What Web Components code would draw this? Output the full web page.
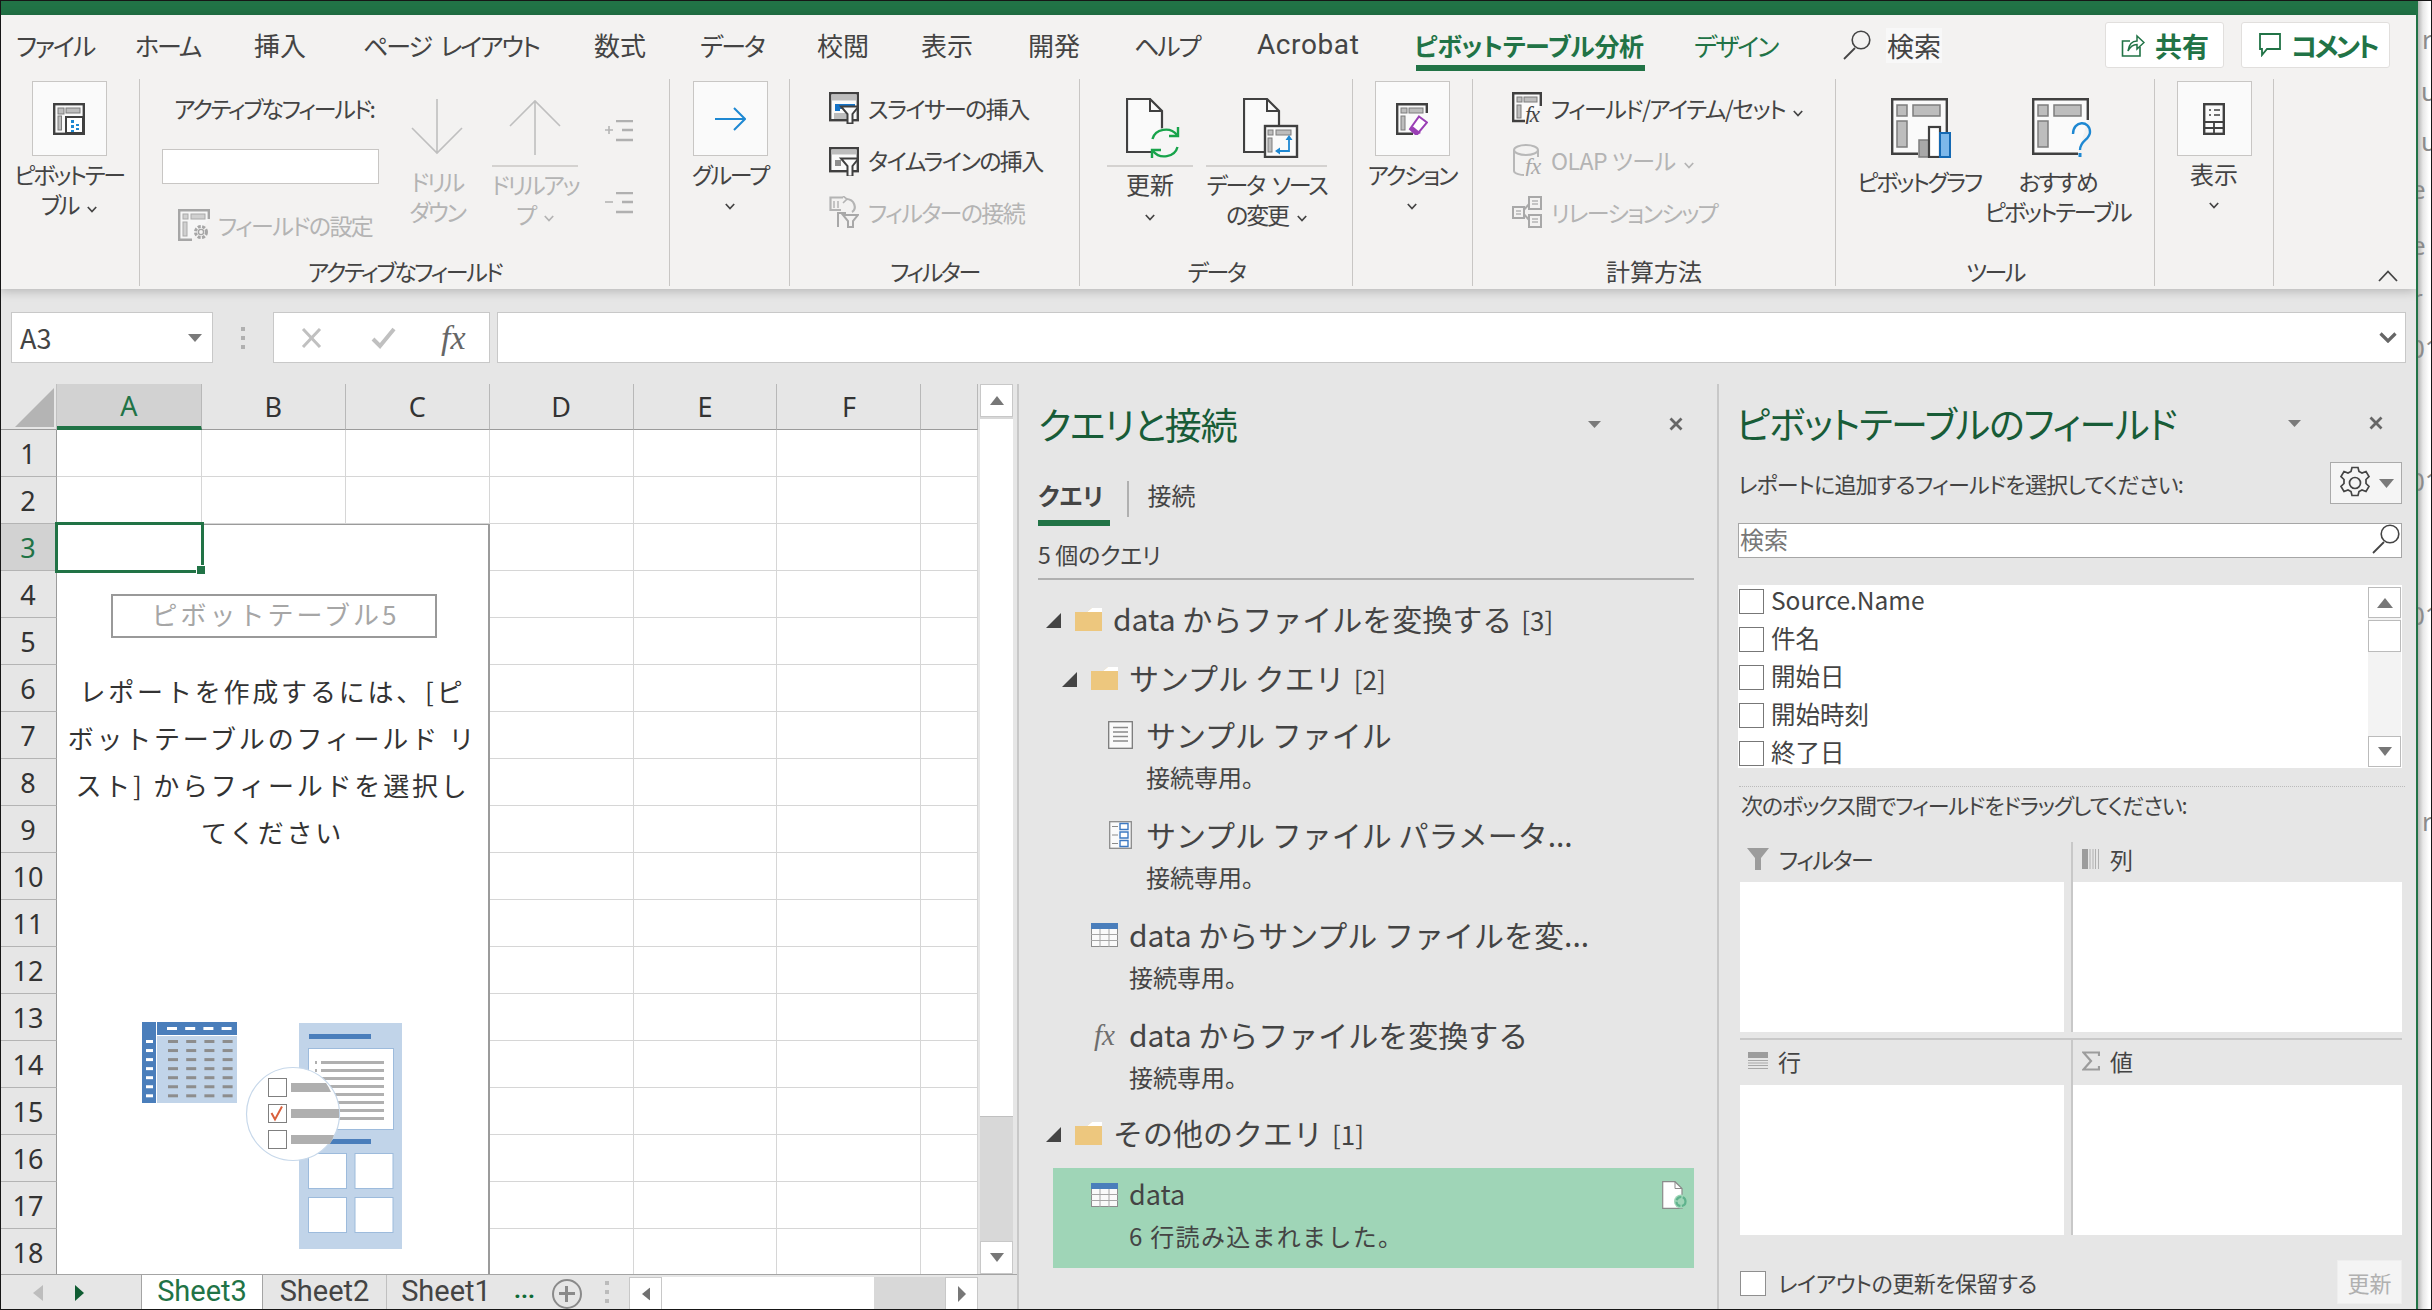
<!DOCTYPE html>
<html lang="ja">
<head>
<meta charset="utf-8">
<title>Excel</title>
<style>
  html, body { margin: 0; padding: 0; background: #e6e6e6; }
  body { font-family: "Noto Sans CJK JP", "Noto Sans", sans-serif; color: #444; font-feature-settings: "palt"; overflow: hidden; }
</style>
</head>
<body>
<xl-app>
  <xl-ribbon slot="ribbon">
    <xl-group w="140">
      <xl-big box icon="pivot" w="138" l1="ピボットテー" l2="ブル" chev></xl-big>
    </xl-group>
    <xl-group w="530" label="アクティブなフィールド">
      <xl-fieldbox></xl-fieldbox>
      <xl-big icon="down" w="60" l1="ドリル" l2="ダウン" off style="margin-left:28px"></xl-big>
      <xl-big rule icon="up" w="86" l1="ドリルアッ" l2="プ" chev off style="margin-left:25px"></xl-big>
      <xl-expand style="margin-left:27px"></xl-expand>
    </xl-group>
    <xl-group w="120">
      <xl-big box icon="arrow" w="120" l1="グループ" chev-line></xl-big>
    </xl-group>
    <xl-group w="290" label="フィルター" pad="39" column>
      <xl-row icon="slicer" label="スライサーの挿入"></xl-row>
      <xl-row icon="timeline" label="タイムラインの挿入"></xl-row>
      <xl-row icon="connect" label="フィルターの接続" off></xl-row>
    </xl-group>
    <xl-group w="273" label="データ" pad="27">
      <xl-big rule icon="refresh" w="86" l1="更新" ls="0" shift="8" chev-line></xl-big>
      <xl-big rule icon="source" w="121" l1="データ ソース" l2="の変更" shift="8" chev style="margin-left:13px"></xl-big>
    </xl-group>
    <xl-group w="120">
      <xl-big box icon="action" w="118" l1="アクション" chev-line></xl-big>
    </xl-group>
    <xl-group w="363" label="計算方法" ls="0" pad="39" column>
      <xl-row icon="fxitem" label="フィールド/アイテム/セット" chev></xl-row>
      <xl-row icon="olap" label="OLAP ツール" ls="-.5" chev off></xl-row>
      <xl-row icon="relation" label="リレーションシップ" off></xl-row>
    </xl-group>
    <xl-group w="319" label="ツール" pad="22">
      <xl-big icon="chart" w="122" shift="3" l1="ピボットグラフ"></xl-big>
      <xl-big icon="recommend" w="145" shift="8" l1="おすすめ" l2="ピボットテーブル" style="margin-left:5px"></xl-big>
    </xl-group>
    <xl-group w="119">
      <xl-big box icon="show" w="118" l1="表示" ls="0" chev-line></xl-big>
    </xl-group>
  </xl-ribbon>

  <xl-formula slot="formula"></xl-formula>

  <xl-sheet slot="sheet">
    <xl-placeholder></xl-placeholder>
  </xl-sheet>

  <xl-queries slot="queries">
    <xl-qitem pad="8" icon="folder" twisty label="data からファイルを変換する" count="[3]" gap="0"></xl-qitem>
    <xl-qitem pad="24" icon="folder" twisty label="サンプル クエリ" count="[2]" gap="17"></xl-qitem>
    <xl-qitem pad="70" icon="doc" label="サンプル ファイル" sub="接続専用。" gap="15"></xl-qitem>
    <xl-qitem pad="70" icon="param" label="サンプル ファイル パラメータ..." sub="接続専用。" gap="16"></xl-qitem>
    <xl-qitem pad="53" icon="table" label="data からサンプル ファイルを変..." sub="接続専用。" gap="16"></xl-qitem>
    <xl-qitem pad="53" icon="fx" label="data からファイルを変換する" sub="接続専用。" gap="16"></xl-qitem>
    <xl-qitem pad="8" icon="folder" twisty label="その他のクエリ" count="[1]" gap="14"></xl-qitem>
    <xl-qitem pad="38" icon="table" label="data" sub="6 行読み込まれました。" gap="14" selected></xl-qitem>
  </xl-queries>

  <xl-fields slot="fields">
    <xl-check label="Source.Name"></xl-check>
    <xl-check label="件名"></xl-check>
    <xl-check label="開始日"></xl-check>
    <xl-check label="開始時刻"></xl-check>
    <xl-check label="終了日"></xl-check>
  </xl-fields>
</xl-app>

<script>
const GR = '#404040', LG = '#bdbdbd', MG = '#7d7d7d', BL = '#1e88d2'

const svg = (w, h, body, vb) => `<svg xmlns="http://www.w3.org/2000/svg" width="${w}" height="${h}" viewBox="${vb || `0 0 ${w} ${h}`}" fill="none">${body}</svg>`

const docShape = (x, y, w, h, f) => `<path d="M${x+1} ${y+1}H${x+w-f}L${x+w-1} ${y+f}V${y+h-1}H${x+1}Z" fill="#fafafa" stroke="${GR}" stroke-width="2.2"/><path d="M${x+w-f} ${y+1}V${y+f}H${x+w-1}" stroke="${GR}" stroke-width="2"/>`

const ICONS = {
  pivot: svg(32, 32, `<rect x="1.2" y="1.2" width="29.6" height="29.6" fill="#fafafa" stroke="${GR}" stroke-width="2.4"/>
    <rect x="5" y="5" width="6" height="6" fill="${LG}" stroke="${MG}"/><rect x="13" y="5" width="14" height="5" fill="${LG}" stroke="${MG}"/>
    <rect x="5" y="13" width="3.5" height="14" fill="${LG}" stroke="${MG}"/>
    <rect x="13" y="14" width="17" height="16" fill="#fff" stroke="${GR}" stroke-width="2"/>
    <path d="M18 17h3v3h-3zM18 22h3v3h-3zM18 27h3v2h-3zM23 21h3v2h-3zM23 25h3v2h-3z" fill="${BL}"/>`),
  settings: svg(32, 32, `<path d="M14 30.8H1.2V1.2H30.8V10" stroke="#a6a6a6" stroke-width="2.4" fill="#f6f6f6"/>
    <rect x="5" y="5" width="5" height="5" fill="#d0d0d0" stroke="#aaa"/><rect x="13" y="5" width="14" height="5" fill="#d0d0d0" stroke="#aaa"/><rect x="5" y="13" width="4" height="14" fill="#d0d0d0" stroke="#aaa"/>
    <circle cx="23" cy="23" r="5.5" stroke="#a6a6a6" stroke-width="3" stroke-dasharray="3 1.4"/><circle cx="23" cy="23" r="2.6" stroke="#a6a6a6" stroke-width="1.4" fill="#f3f2f1"/>`),
  down: svg(52, 58, `<path d="M26 1V55M1 30L26 55L51 30" stroke="#bfbfbf" stroke-width="1.6"/>`),
  up: svg(52, 58, `<path d="M26 57V3M1 28L26 3L51 28" stroke="#bfbfbf" stroke-width="1.6"/>`),
  plus: svg(28, 22, `<path d="M0 10h8M4 6v8" stroke="#b5b5b5" stroke-width="1.6"/><path d="M11 1h17M17 10h11M11 20h17" stroke="#b0b0b0" stroke-width="2.6"/>`),
  minus: svg(28, 22, `<path d="M0 10h8" stroke="#b5b5b5" stroke-width="1.6"/><path d="M11 1h17M17 10h11M11 20h17" stroke="#b0b0b0" stroke-width="2.6"/>`),
  arrow: svg(32, 24, `<path d="M1 12H30M20 1L31 12L20 23" stroke="${BL}" stroke-width="2"/>`),
  slicer: svg(30, 32, `<rect x="1.2" y="1.2" width="27.6" height="27" fill="#fafafa" stroke="${GR}" stroke-width="2.4"/>
    <rect x="2.5" y="2.5" width="25" height="6" fill="${LG}"/>
    <path d="M6 19v-7h20v5h-15v2z" fill="#1573c7"/><rect x="5" y="21" width="13" height="6" fill="${LG}"/>
    <path d="M12 14.5H29.5L23.5 22V31.5H18.5V22Z" fill="#fafafa" stroke="${GR}" stroke-width="2"/>`),
  timeline: svg(30, 32, `<rect x="1.2" y="1.2" width="27.6" height="23" fill="#fafafa" stroke="${GR}" stroke-width="2.4"/>
    <rect x="2.5" y="2.5" width="25" height="5" fill="${LG}"/><rect x="6" y="13" width="6" height="6" fill="#8f8f8f"/>
    <path d="M12 11.5H29.5L23.5 19V29.5H18.5V19Z" fill="#fafafa" stroke="${GR}" stroke-width="2"/>`, '0 -3 30 32'),
  connect: svg(30, 32, `<path d="M12 14H1.5V1.5H14" stroke="#b4b4b4" stroke-width="2.2"/><path d="M5 5v7M9 5v7" stroke="#c4c4c4" stroke-width="2"/>
    <path d="M17 3C26 3 28 13 23 16" stroke="#b4b4b4" stroke-width="2.2"/><path d="M14 0L18 3L14 7" stroke="#b4b4b4" stroke-width="1.6"/>
    <path d="M9 31V17H17" stroke="#a8a8a8" stroke-width="2"/><path d="M14 19H29L24 25V31H19V25Z" fill="#f3f2f1" stroke="#a8a8a8" stroke-width="2"/>`),
  refresh: svg(56, 60, `${docShape(0, 0, 37, 55, 13)}
    <circle cx="39" cy="45" r="15" fill="#f6f6f6"/>
    <path d="M26.500 41C29 31 44 28 51 37M51.500 49C49 59 34 62 27 53" stroke="#17a34a" stroke-width="2.400"/>
    <path d="M52 29V38H43M26 61V52H35" stroke="#17a34a" stroke-width="2.400"/>`),
  source: svg(56, 60, `${docShape(0, 0, 37, 55, 13)}
    <rect x="22" y="28" width="32" height="31" fill="#fafafa" stroke="${GR}" stroke-width="2.4"/>
    <rect x="25" y="32" width="5" height="5" fill="${LG}" stroke="${MG}"/><rect x="33" y="32" width="15" height="5" fill="${LG}" stroke="${MG}"/><rect x="25" y="40" width="4" height="14" fill="${LG}" stroke="${MG}"/>
    <path d="M46 42V53H37" stroke="${BL}" stroke-width="1.8"/><path d="M46 37l-3.500 5h7zM32 53l5-3.500v7z" fill="${BL}"/>`),
  action: svg(32, 32, `<path d="M17 30.8H1.2V1.2H30.8V10" fill="#fafafa" stroke="${GR}" stroke-width="2.4"/>
    <rect x="5" y="5" width="6" height="5" fill="${LG}" stroke="${MG}"/><rect x="13" y="5" width="14" height="5" fill="${LG}" stroke="${MG}"/><rect x="5" y="13" width="4" height="14" fill="${LG}" stroke="${MG}"/>
    <path d="M23 13.5L31 19.5L20.5 32L14 26Z" fill="#fff" stroke="#9a3fb5" stroke-width="2"/><path d="M17 23.5L25 30L20.5 32L14 26Z" fill="#9a3fb5"/>`),
  fxitem: svg(30, 32, `<path d="M13 29H1.2V1.2H28.8V14" fill="#fafafa" stroke="${GR}" stroke-width="2.4"/>
    <rect x="5" y="5" width="5" height="5" fill="${LG}" stroke="${MG}"/><rect x="12" y="5" width="13" height="5" fill="${LG}" stroke="${MG}"/><rect x="5" y="13" width="4" height="13" fill="${LG}" stroke="${MG}"/>
    <text x="13" y="30" font-family="Liberation Serif" font-style="italic" font-size="23" fill="#444">fx</text>`),
  olap: svg(30, 32, `<path d="M2 6V27C2 30 10 31 12 31M26 6V13" stroke="#b8b8b8" stroke-width="2"/><ellipse cx="14" cy="6" rx="12" ry="5" fill="#f3f2f1" stroke="#b8b8b8" stroke-width="2"/>
    <text x="13" y="30" font-family="Liberation Serif" font-style="italic" font-size="23" fill="#a8a8a8">fx</text>`),
  relation: svg(30, 32, `<path d="M10 16L18 7M10 16L18 25" stroke="#aaa" stroke-width="2"/>
    <rect x="1" y="11" width="11" height="11" fill="#f3f2f1" stroke="#a8a8a8" stroke-width="2"/><rect x="17" y="1" width="12" height="12" fill="#f3f2f1" stroke="#a8a8a8" stroke-width="2"/><rect x="17" y="19" width="12" height="12" fill="#f3f2f1" stroke="#a8a8a8" stroke-width="2"/>
    <path d="M4 15h5M4 18h5M20 5h6M20 8h6M20 23h6M20 26h6" stroke="#b5b5b5" stroke-width="1.3"/>`),
  chart: svg(60, 60, `<path d="M27 55.8H1.2V1.2H55.8V50" fill="#fafafa" stroke="${GR}" stroke-width="2.4"/>
    <rect x="6" y="7" width="10" height="11" fill="${LG}" stroke="${MG}" stroke-width="1.5"/><rect x="22" y="7" width="27" height="11" fill="${LG}" stroke="${MG}" stroke-width="1.5"/><rect x="6" y="23" width="10" height="26" fill="${LG}" stroke="${MG}" stroke-width="1.5"/>
    <rect x="28" y="42" width="11" height="17" fill="#a8a8a8" stroke="${MG}" stroke-width="1.5"/><rect x="38" y="29" width="11" height="30" fill="#fff" stroke="${GR}" stroke-width="2.2"/><rect x="49" y="35" width="10" height="24" fill="#7db8ea" stroke="#1469b3" stroke-width="2"/>`),
  recommend: svg(60, 60, `<path d="M46 55.8H1.2V1.2H55.8V22" fill="#fafafa" stroke="${GR}" stroke-width="2.4"/>
    <rect x="6" y="7" width="10" height="11" fill="${LG}" stroke="${MG}" stroke-width="1.5"/><rect x="22" y="7" width="27" height="11" fill="${LG}" stroke="${MG}" stroke-width="1.5"/><rect x="6" y="23" width="10" height="26" fill="${LG}" stroke="${MG}" stroke-width="1.5"/>
    <path d="M41 36C41 22 58 22 58 34C58 42 48 42 48 52" stroke="${BL}" stroke-width="2.4"/><rect x="46.5" y="55" width="3" height="4" fill="${BL}"/>`),
  show: svg(22, 32, `<rect x="1.2" y="1.2" width="19.6" height="29.6" fill="#fafafa" stroke="${GR}" stroke-width="2.4"/>
    <path d="M6 7h2M11 7h6M6 12h2M11 12h6" stroke="${GR}" stroke-width="1.6"/><path d="M1 19h20M1 25h20M11 19v12" stroke="${GR}" stroke-width="1.8"/>`),
  magnifier: svg(28, 30, `<circle cx="18" cy="10" r="8.8" stroke="#444" stroke-width="1.6"/><path d="M12 18L1 29" stroke="#444" stroke-width="1.8"/>`),
  share: svg(24, 24, `<path d="M9 8H1.5V23H19V14" stroke="#217346" stroke-width="1.6"/><path d="M7 18C8 11 12 8 16 8V3L23 9.5L16 16V11.5C12 11.5 9 14 7 18Z" stroke="#217346" stroke-width="1.5" fill="#fff"/>`),
  comment: svg(22, 24, `<path d="M1 1H21V16H8L3 22V16H1Z" stroke="#217346" stroke-width="1.8" fill="#fff"/>`),
  folder: svg(27, 24, `<path d="M17 1H27V6H12Z" fill="#fff"/><path d="M0 5h12l5-4v4h10v19H0z" fill="#edc77e"/><path d="M17 1L12 5H27V1Z" fill="#fff"/>`),
  doc: svg(25, 28, `<rect x=".7" y=".7" width="23.6" height="26.6" fill="#fafafa" stroke="#7a7a7a" stroke-width="1.3"/><path d="M5 6.5h15M5 11h15M5 15.5h15M5 20h15" stroke="#8a8a8a" stroke-width="1.3"/>`),
  param: svg(23, 28, `<rect x=".7" y=".7" width="21.6" height="26.6" fill="#fafafa" stroke="#8a8a8a" stroke-width="1.3"/><path d="M3 5.5h6M3 14h6M3 22.5h6" stroke="#8a8a8a" stroke-width="1.2"/><path d="M11 2.5h8v6h-8zM11 11h8v6h-8zM11 19.500h8v6h-8z" stroke="#3d79c2" stroke-width="1.4" fill="#fff"/>`),
  table: svg(27, 24, `<rect x=".5" y=".5" width="26" height="23" fill="#fafafa" stroke="#8c8c8c"/><rect width="27" height="6" fill="#4a7ebb"/><path d="M0 11.500h27M0 17.500h27M9 6v18M18 6v18" stroke="#a6a6a6"/>`),
  fx: `<span class="fx">fx</span>`,
  docsync: svg(26, 28, `<path d="M.7.7H13L20 7.500V27.300H.7Z" fill="#fff" stroke="#8a8a8a" stroke-width="1.2"/><path d="M13 .7V7.500H20" stroke="#8a8a8a" stroke-width="1"/><circle cx="19" cy="20.500" r="7" fill="#9fd5b7"/><circle cx="19" cy="20.500" r="4.500" stroke="#5fb38d" stroke-width="2.2" stroke-dasharray="6 1.500"/>`),
  gear: svg(34, 34, `<path d="M14 1.500h6l1 4 3 1.500 4-1.500 3 5-3 3v4l3 3-3 5-4-1.500-3 1.500-1 4h-6l-1-4-3-1.500-4 1.500-3-5 3-3v-4l-3-3 3-5 4 1.500 3-1.500z" stroke="#444" stroke-width="1.700" fill="#f5f5f5"/><circle cx="17" cy="17" r="5.500" stroke="#444" stroke-width="1.700"/>`),
  filter: svg(22, 22, `<path d="M0 0H22L14 10V22H8V10Z" fill="#9c9c9c"/>`),
  cols: svg(18, 20, `<path d="M0 0h6v20H0z" fill="#9c9c9c"/><path d="M8 0v20M11 0v20M13.500 0v20M16.500 0v20" stroke="#b0b0b0" stroke-width="1"/>`),
  rows: svg(20, 18, `<path d="M0 0h20v6H0z" fill="#9c9c9c"/><path d="M0 8.500h20M0 11h20M0 13.500h20M0 16.500h20" stroke="#a8a8a8" stroke-width="1"/>`),
  sigma: svg(18, 20, `<path d="M17 5V1.500H1.500L9 10L1.500 18.500H17V15" stroke="#9c9c9c" stroke-width="2.200"/>`),
  illustration: svg(262, 228, `
    <rect x="0" y="0" width="14" height="81" fill="#4a7ebb"/><rect x="15" y="0" width="80" height="13" fill="#4a7ebb"/><rect x="15" y="14" width="80" height="67" fill="#c1d4e9"/>
    <g fill="#fff">${[0, 1, 2, 3].map(i => `<rect x="${25 + i * 18.200}" y="5" width="10" height="3"/>`).join('')}${[0,1,2,3,4,5,6].map(i => `<rect x="4" y="${18 + i * 9.050}" width="7" height="3"/>`).join('')}</g>
    <g fill="#8d8d8d">${[0,1,2,3,4,5,6].map(r => [0,1,2,3].map(c => `<rect x="${26 + c * 18.200}" y="${18 + r * 9.050}" width="10" height="3"/>`).join('')).join('')}</g>
    <rect x="157" y="1" width="103" height="226" fill="#c1d4e9"/>
    <rect x="167" y="12" width="62" height="5" fill="#4a7ebb"/><rect x="167" y="117" width="62" height="5" fill="#4a7ebb"/>
    <rect x="166.500" y="26.500" width="85" height="81" fill="#fff" stroke="#9dbbdc"/>
    ${[0,1,2,3,4,5,6,7].map(i => `<rect x="179" y="${39 + i * 8}" width="63" height="3" fill="#b0b0b0"/>`).join('')}
    <rect x="173" y="39" width="2" height="3" fill="#b0b0b0"/><rect x="173" y="47" width="2" height="3" fill="#b0b0b0"/>
    ${[0,1].map(r => [0,1].map(c => `<rect x="${166.500 + c * 46.500}" y="${131.500 + r * 44}" width="38" height="35" fill="#fff" stroke="#9dbbdc"/>`).join('')).join('')}
    <ellipse cx="151" cy="92" rx="46.500" ry="46.500" fill="#fff" stroke="#c7d8ea" stroke-width="1.200"/>
    <g fill="#fff" stroke="#7f7f7f" stroke-width="1"><rect x="126.500" y="56.500" width="18" height="18"/><rect x="126.500" y="82.500" width="18" height="18"/><rect x="126.500" y="108.500" width="18" height="18"/></g>
    <g fill="#afafaf"><path d="M149 61h35a46 46 0 0 1 5 9h-40zM149 87h48v9h-48zM149 113h43a46 46 0 0 1-4 9h-39z"/></g>
    <path d="M129.500 91l3.500 6.500 7-13" stroke="#d9603c" stroke-width="2"/>`),
  triL: svg(10, 16, `<path d="M10 0V16L0 8Z" fill="#bdbdbd"/>`),
  triR: svg(9, 16, `<path d="M0 0V16L9 8Z" fill="#0f5c32"/>`)
}

class XlIcon extends HTMLElement {
  constructor() {
    super()
    this.attachShadow({ mode: 'open' })
  }
  connectedCallback() {
    this.shadowRoot.innerHTML = `<style>
      :host{display:inline-flex;flex:none;align-items:center;justify-content:center;line-height:0}
      svg{display:block}
      .fx{font:italic 29px/1 "Liberation Serif",serif;color:#6e6e6e}
    </style>${ICONS[this.getAttribute('name')] || ''}`
  }
}

class XlChev extends HTMLElement {
  constructor() {
    super()
    this.attachShadow({ mode: 'open' }).innerHTML = `<style>
      :host{display:inline-block;line-height:0;vertical-align:middle}
      path{stroke:currentColor;stroke-width:1.7;fill:none}
    </style><svg width="10" height="7" viewBox="0 0 10 7"><path d="M.8 1L5 5.500L9.200 1"/></svg>`
  }
}

class XlApp extends HTMLElement {
  constructor() {
    super()
    this.attachShadow({ mode: 'open' }).innerHTML = `<style>
      :host{display:block;position:relative;width:2432px;height:1310px;overflow:hidden;background:#e6e6e6}
      :host::after{content:"";position:absolute;inset:0;border:1px solid #161616;pointer-events:none}
      .wrap{display:flex}
      .left{width:2416px;flex:none}
      .title{height:15px;background:#217346}
      .body{display:flex;height:926px}
    </style>
    <div class="wrap">
      <div class="left">
        <div class="title"></div>
        <slot name="ribbon"></slot>
        <slot name="formula"></slot>
        <div class="body"><slot name="sheet"></slot><slot name="queries"></slot><slot name="fields"></slot></div>
      </div>
      <xl-sliver></xl-sliver>
    </div>`
  }
}

// the sliver of the window lying behind Excel, at the right edge
class XlSliver extends HTMLElement {
  constructor() {
    super()
    const bits = [['r', 26, 4], ['u', 78, 3], ['u', 128, 3], ['e', 176, -7], ['e', 232, -7], ['r', 285, -6], ['01', 335, -8], ['01', 468, -8], ['01', 602, -8], ['r', 808, 4]]
    this.attachShadow({ mode: 'open' }).innerHTML = `<style>
      :host{display:block;position:relative;width:16px;height:1310px;flex:none;overflow:hidden;box-sizing:border-box;
        border-left:2px solid #217346;background:linear-gradient(90deg,#b5b5b5,#e8e8e8 5px,#fff 11px)}
      span{position:absolute;font:26px/1 "Noto Sans",sans-serif;color:#8c8c8c}
    </style>${bits.map(([t, y, x]) => `<span style="top:${y}px;left:${x}px">${t}</span>`).join('')}`
  }
}

class XlRibbon extends HTMLElement {
  constructor() {
    super()
    // name, column width, extra inline style for the narrow Yu Gothic look
    const kana = 'font-size:25px;letter-spacing:-2.1px;word-spacing:6px', kanji = 'font-size:26px;letter-spacing:0'
    const tabs = [['ファイル', 119, kana], ['ホーム', 119, kana], ['挿入', 109, kanji], ['ページ レイアウト', 231, kana], ['数式', 106, kanji], ['データ', 117, kana], ['校閲', 104, kanji], ['表示', 107, kanji], ['開発', 106, kanji], ['ヘルプ', 123, kana], ['Acrobat', 157, 'font:28px/60px Roboto,sans-serif;letter-spacing:.6px'], ['ピボットテーブル分析', 280, 'font-size:25px;letter-spacing:-.4px'], ['デザイン', 149, kana]]
    this.attachShadow({ mode: 'open' }).innerHTML = `<style>
      :host{display:block;background:#f3f2f1;height:274px;box-shadow:0 2px 10px rgba(0,0,0,.22);position:relative;font-size:22px;
        font-family:"Noto Sans CJK JP",sans-serif;color:#444;font-feature-settings:"palt"}
      .tabs{display:flex;height:64px;padding-left:16px;align-items:flex-start}
      .tab{flex:none;line-height:60px;position:relative;white-space:nowrap}
      .tab.on{color:#217346;font-weight:700}
      .tab.on::after{content:"";position:absolute;left:2px;width:229px;top:50px;height:6px;background:#217346}
      .tab.green{color:#217346}
      .find{display:flex;align-items:center;height:60px;gap:15px;flex:none}
      .find span{background:#f8f8f8;padding:0 1px;line-height:35px;font-size:27px}
      .btn{display:flex;align-items:center;gap:10px;height:46px;box-sizing:border-box;margin-top:7px;background:#fff;border:1px solid #e1dfdd;border-radius:3px;
        color:#217346;font-weight:700;font-size:27px;flex:none;padding-left:15px}
      .groups{display:flex;height:207px}
      .end{flex:1;display:flex;justify-content:flex-end;align-items:flex-end;padding:0 18px 4px 0}
    </style>
    <div class="tabs">
      ${tabs.map(([t, w, s], i) => `<div class="tab ${i === 11 ? 'on' : ''} ${i === 12 ? 'green' : ''}" style="width:${w}px;${s}">${t}</div>`).join('')}
      <div class="find"><xl-icon name="magnifier"></xl-icon><span>検索</span></div>
      <div style="width:163px;flex:none"></div>
      <div class="btn" style="width:119px"><xl-icon name="share"></xl-icon>共有</div>
      <div class="btn" style="width:149px;margin-left:17px;padding-left:17px;letter-spacing:-3px"><xl-icon name="comment"></xl-icon>コメント</div>
    </div>
    <div class="groups"><slot></slot>
      <div class="end"><svg width="20" height="12" viewBox="0 0 20 12"><path d="M1 11L10 1.500L19 11" stroke="#444" stroke-width="1.800" fill="none"/></svg></div>
    </div>`
  }
}

class XlGroup extends HTMLElement {
  constructor() { super(); this.attachShadow({ mode: 'open' }) }
  connectedCallback() {
    const col = this.hasAttribute('column')
    const ls = this.getAttribute('ls')
    this.shadowRoot.innerHTML = `<style>
      :host{display:flex;flex-direction:column;flex:none;box-sizing:border-box;height:207px;border-right:1.500px solid #c8c6c4;width:${this.getAttribute('w')}px}
      .b{flex:1;display:flex;min-height:0;padding-left:${this.getAttribute('pad') || 0}px;${col ? 'flex-direction:column;padding-top:3px' : ''}}
      .c{height:24px;line-height:24px;text-align:center;font-size:${ls !== null ? 24 : 23}px;letter-spacing:${ls !== null ? ls : -2.4}px;margin-bottom:3px;white-space:nowrap}
    </style><div class="b"><slot></slot></div><div class="c">${this.getAttribute('label') || ''}</div>`
  }
}

class XlBig extends HTMLElement {
  constructor() { super(); this.attachShadow({ mode: 'open' }) }
  connectedCallback() {
    const box = this.hasAttribute('box'), rule = this.hasAttribute('rule'), off = this.hasAttribute('off')
    const chev = this.hasAttribute('chev'), chevLine = this.hasAttribute('chev-line')
    const l2 = this.getAttribute('l2'), ls = this.getAttribute('ls')
    this.shadowRoot.innerHTML = `<style>
      :host{display:flex;flex-direction:column;align-items:center;flex:none;width:${this.getAttribute('w')}px;color:${off ? '#b4b4b4' : '#444'}}
      .box{width:75px;height:75px;box-sizing:border-box;margin-top:2px;background:#fafafa;border:1.500px solid #c8c6c4;display:flex;align-items:center;justify-content:center}
      .ic{height:60px;margin-top:19px;margin-left:${this.getAttribute('shift') || 0}px;display:flex;align-items:flex-start;justify-content:center}
      .rule{align-self:stretch;height:1.500px;background:#d4d2d0;margin-top:7px}
      .t{line-height:30px;white-space:nowrap;font-size:${ls !== null ? 24 : 23}px;letter-spacing:${ls !== null ? ls : -2.2}px;word-spacing:5px;text-align:center}
      .first{margin-top:${box ? 3 : rule ? 2 : 8}px}
      .cl{margin-top:${box ? -3 : -1}px}
      xl-chev{margin-left:9px}
    </style>
    ${box ? `<div class="box"><xl-icon name="${this.getAttribute('icon')}"></xl-icon></div>` : `<div class="ic"><xl-icon name="${this.getAttribute('icon')}"></xl-icon></div>`}
    ${rule ? '<div class="rule"></div>' : ''}
    <div class="t first">${this.getAttribute('l1')}${chev && !l2 ? '<xl-chev></xl-chev>' : ''}</div>
    ${l2 ? `<div class="t">${l2}${chev ? '<xl-chev></xl-chev>' : ''}</div>` : ''}
    ${chevLine ? '<div class="t cl"><xl-chev style="margin:0"></xl-chev></div>' : ''}`
  }
}

class XlRow extends HTMLElement {
  constructor() { super(); this.attachShadow({ mode: 'open' }) }
  connectedCallback() {
    const off = this.hasAttribute('off')
    this.shadowRoot.innerHTML = `<style>
      :host{display:flex;align-items:center;height:52px;gap:9px;font-size:23px;letter-spacing:${this.getAttribute('ls') || -1.6}px;white-space:nowrap;color:${off ? '#b4b4b4' : '#444'}}
      xl-chev{margin-left:8px}
    </style><xl-icon name="${this.getAttribute('icon')}"></xl-icon><span>${this.getAttribute('label')}${this.hasAttribute('chev') ? '<xl-chev></xl-chev>' : ''}</span>`
  }
}

class XlFieldbox extends HTMLElement {
  constructor() {
    super()
    this.attachShadow({ mode: 'open' }).innerHTML = `<style>
      :host{display:flex;flex-direction:column;flex:none;width:217px;margin-left:22px;font-size:23px;letter-spacing:-2.2px;white-space:nowrap}
      .l{margin:14px 0 0 12px;line-height:30px}
      .i{margin-top:26px;height:35px;box-sizing:border-box;background:#fff;border:1.500px solid #c8c6c4}
      .s{margin:25px 0 0 16px;display:flex;align-items:center;gap:8px;color:#b4b4b4;height:32px;letter-spacing:-1.6px}
    </style>
    <div class="l">アクティブなフィールド:</div><div class="i"></div>
    <div class="s"><xl-icon name="settings"></xl-icon>フィールドの設定</div>`
  }
}

class XlExpand extends HTMLElement {
  constructor() {
    super()
    this.attachShadow({ mode: 'open' }).innerHTML = `<style>
      :host{display:flex;flex-direction:column;flex:none;gap:50px;padding-top:41px}
    </style><xl-icon name="plus"></xl-icon><xl-icon name="minus"></xl-icon>`
  }
}

class XlFormula extends HTMLElement {
  constructor() {
    super()
    this.attachShadow({ mode: 'open' }).innerHTML = `<style>
      :host{display:flex;align-items:flex-start;height:95px;box-sizing:border-box;padding:23px 10px 0 11px;background:#e6e6e6;font-family:"Noto Sans CJK JP",sans-serif}
      .b{height:51px;box-sizing:border-box;background:#fff;border:1.500px solid #c8c8c8;display:flex;align-items:center;flex:none}
      .name{width:202px;padding:0 10px 0 8px;justify-content:space-between;font-size:27px;color:#444}
      .tri{width:0;height:0;border:7px solid transparent;border-top:8px solid #7a7a7a;border-bottom:0}
      .dots{width:60px;flex:none;display:flex;flex-direction:column;align-items:center;gap:5px;padding-top:15px}
      .dots i{width:4px;height:4px;background:#b0b0b0}
      .fxb{width:217px;position:relative}
      .fxb svg{flex:none}
      .fxt{font:italic 34px/1 "Liberation Serif",serif;color:#666}
      .in{flex:1;margin-left:7px;justify-content:flex-end;padding-right:8px}
    </style>
    <div class="b name">A3<span class="tri"></span></div>
    <div class="dots"><i></i><i></i><i></i></div>
    <div class="b fxb">
      <svg style="margin-left:27px" width="21" height="20" viewBox="0 0 21 20"><path d="M2 1L19 19M19 1L2 19" stroke="#c0c0c0" stroke-width="3" fill="none"/></svg>
      <svg style="margin-left:49px" width="25" height="22" viewBox="0 0 25 22"><path d="M2 12L9 19L23 2" stroke="#c0c0c0" stroke-width="4" fill="none"/></svg>
      <span class="fxt" style="margin-left:45px">fx</span>
    </div>
    <div class="b in"><svg width="18" height="11" viewBox="0 0 18 11"><path d="M1.500 1.500L9 9L16.500 1.500" stroke="#666" stroke-width="3.200" fill="none"/></svg></div>`
  }
}

class XlSheet extends HTMLElement {
  constructor() {
    super()
    const cols = ['A', 'B', 'C', 'D', 'E', 'F', '']
    let cells = `<div class="corner"><span></span></div>`
    cols.forEach((c, i) => { cells += `<div class="ch ${i === 0 ? 'on' : ''}">${c}</div>` })
    for (let r = 1; r <= 18; r++) {
      cells += `<div class="rh ${r === 3 ? 'on' : ''}">${r}</div>`
      cols.forEach(() => { cells += '<div class="c"></div>' })
    }
    this.attachShadow({ mode: 'open' }).innerHTML = `<style>
      :host{display:flex;flex-direction:column;width:1017px;flex:none;height:926px;font-family:"Noto Sans","Noto Sans CJK JP",sans-serif}
      .main{display:flex;height:890px;position:relative}
      .grid{width:978px;height:890px;overflow:hidden;position:relative;flex:none;background:#fff;display:grid;
        grid-template-columns:57px 145px 143.800px repeat(4,143.900px) 57px;grid-template-rows:46px repeat(18,47px);font-size:27px;color:#333}
      .corner{background:#e6e6e6;border-bottom:1.500px solid #9b9b9b;box-sizing:border-box;padding:4px 3px 0 15px;border-right:1px solid #c0c0c0}
      .corner span{display:block;width:39px;height:39px;background:#b4b4b4;clip-path:polygon(100% 0,100% 100%,0 100%)}
      .ch,.rh{background:#e6e6e6;display:flex;align-items:center;justify-content:center;box-sizing:border-box;line-height:1}
      .ch{border-right:1px solid #b8b8b8;border-bottom:1.500px solid #9b9b9b}
      .rh{border-bottom:1.500px solid #b4b4b4;border-right:1px solid #9b9b9b}
      .on{background:#d2d2d2;color:#217346}
      .ch.on{border-bottom:4px solid #217346}
      .c{border-right:1.500px solid #d6d6d6;border-bottom:1.500px solid #d6d6d6;box-sizing:border-box}
      .sel{position:absolute;left:55px;top:138px;width:149px;height:51px;box-sizing:border-box;border:3px solid #217346;z-index:2}
      .sel::after{content:"";position:absolute;right:-4px;bottom:-4px;width:8px;height:8px;background:#217346;box-shadow:0 0 0 1px #fff}
      .v{margin-left:2px;width:33px;display:flex;flex-direction:column;flex:none;height:890px;background:#d8d8d8}
      .v .btn{height:33px;background:#fff;border:1.500px solid #c8c8c8;box-sizing:border-box;display:flex;align-items:center;justify-content:center;flex:none}
      .v .thumb{height:698px;margin-top:2px;background:#fff;border-bottom:1.500px solid #c0c0c0;box-sizing:border-box;flex:none}
      .v .sp{flex:1}
      .tabs{display:flex;height:36px;border-top:1.500px solid #a4a4a4;box-sizing:border-box;font:29px/33px Roboto,sans-serif;color:#444}
      .nav{width:141px;flex:none;display:flex;align-items:center;gap:32px;padding-left:33px;box-sizing:border-box}
      .t{flex:none;box-sizing:border-box;text-align:center;letter-spacing:0}
      .t.act{width:122px;background:#fff;color:#217346;border:solid #a4a4a4;border-width:0 1.500px}
      .more{color:#0f6a36;font-weight:700;width:36px;flex:none;font-size:24px;line-height:30px}
      .add{width:30px;height:30px;box-sizing:border-box;border:2px solid #8a8a8a;border-radius:50%;margin:4px 0 0 2px;flex:none;position:relative}
      .add::before{content:"";position:absolute;left:5px;right:5px;top:11px;height:3px;background:#8a8a8a}
      .add::after{content:"";position:absolute;top:5px;bottom:5px;left:11px;width:3px;background:#8a8a8a}
      .dv{width:4px;flex:none;margin:6px 0 0 23px;display:flex;flex-direction:column;gap:5px}
      .dv i{height:4px;background:#bbb}
      .hs{display:flex;flex:none;margin:2px 0 0 20px;width:349px;background:#d8d8d8}
      .hs b{width:33px;background:#fff;border:1px solid #c8c8c8;box-sizing:border-box;display:flex;align-items:center;justify-content:center}
      .hs u{width:212px;background:#fff;display:block}
      .hs s{flex:1}
    </style>
    <div class="main">
      <div class="grid">${cells}<slot></slot><div class="sel"></div></div>
      <div class="v">
        <div class="btn"><svg width="14" height="9" viewBox="0 0 14 9"><path d="M7 0L14 9H0Z" fill="#777"/></svg></div>
        <div class="thumb"></div><div class="sp"></div>
        <div class="btn"><svg width="14" height="9" viewBox="0 0 14 9"><path d="M7 9L14 0H0Z" fill="#777"/></svg></div>
      </div>
    </div>
    <div class="tabs">
      <div class="nav"><xl-icon name="triL"></xl-icon><xl-icon name="triR"></xl-icon></div>
      <div class="t act">Sheet3</div>
      <div class="t" style="width:124px;border-right:1px solid #c0c0c0">Sheet2</div>
      <div class="t" style="width:118px">Sheet1</div>
      <div class="more" style="margin-left:9px">...</div>
      <div class="add"></div>
      <div class="dv"><i></i><i></i><i></i></div>
      <div class="hs"><b><xl-icon name="triL" style="filter:brightness(.6);transform:scale(.8)"></xl-icon></b><u></u><s></s><b><svg width="8" height="16" viewBox="0 0 8 16"><path d="M0 0V16L8 8Z" fill="#777"/></svg></b></div>
    </div>`
  }
}

// lies over the grid, as the real PivotTable placeholder does
class XlPlaceholder extends HTMLElement {
  constructor() {
    super()
    this.attachShadow({ mode: 'open' }).innerHTML = `<style>
      :host{position:absolute;left:57px;top:140px;width:433px;height:750px;box-sizing:border-box;background:#fff;border:solid #9b9b9b;border-width:1.500px 2px 0 0;
        display:flex;flex-direction:column;align-items:center;font:26px/47px "Noto Sans CJK JP",sans-serif;color:#333;font-feature-settings:normal}
      .ttl{width:326px;height:44px;margin:69px 0 0 2px;box-sizing:border-box;border:2.500px solid #999;color:#a6a6a6;text-align:center;line-height:36px;letter-spacing:3px;padding-left:4px;white-space:nowrap}
      .msg{margin-top:29px;text-align:center;white-space:nowrap;letter-spacing:2.800px}
      xl-icon{position:absolute;left:85px;top:497px}
    </style>
    <div class="ttl">ピボットテーブル5</div>
    <div class="msg">レポートを作成するには、[ピ<br>ボットテーブルのフィールド リ<br>スト] からフィールドを選択し<br>てください</div>
    <xl-icon name="illustration"></xl-icon>`
  }
}

class XlPaneHead extends HTMLElement {
  constructor() { super(); this.attachShadow({ mode: 'open' }) }
  connectedCallback() {
    this.shadowRoot.innerHTML = `<style>
      :host{display:flex;align-items:center;height:50px;color:#185c37;font-size:37px;letter-spacing:-1.200px;white-space:nowrap;position:relative}
      .x{position:absolute;top:0;bottom:0;display:flex;align-items:center}
    </style>${this.getAttribute('label')}
    <div class="x" style="left:${this.getAttribute('tri')}px"><svg width="13" height="7" viewBox="0 0 13 7"><path d="M0 0H13L6.500 7Z" fill="#7a7a7a"/></svg></div>
    <div class="x" style="left:${this.getAttribute('close')}px"><svg width="14" height="14" viewBox="0 0 14 14"><path d="M1.500 1.500L12.500 12.500M12.500 1.500L1.500 12.500" stroke="#666" stroke-width="2.800"/></svg></div>`
  }
}

class XlQueries extends HTMLElement {
  constructor() {
    super()
    this.attachShadow({ mode: 'open' }).innerHTML = `<style>
      :host{display:block;width:700px;flex:none;box-sizing:border-box;border-left:2px solid #c8c8c8;padding:0 23px 0 19px;font-family:"Noto Sans CJK JP",sans-serif;color:#444;font-feature-settings:"palt"}
      xl-panehead{margin-top:15px}
      .tabs{display:flex;margin-top:32px;height:45px;font-size:24px;position:relative}
      .a{width:72px;font-weight:700;border-bottom:6px solid #217346;height:39px;line-height:28px;letter-spacing:0}
      .s{width:1.500px;height:36px;background:#b0b0b0;margin:0 19px 0 17px}
      .n{line-height:28px}
      .cnt{margin-top:14px;height:38px;line-height:28px;font-size:23px;border-bottom:2px solid #b0b0b0;letter-spacing:-.3px}
      .list{padding-top:18px}
    </style>
    <xl-panehead label="クエリと接続" tri="550" close="631"></xl-panehead>
    <div class="tabs"><div class="a">クエリ</div><div class="s"></div><div class="n">接続</div></div>
    <div class="cnt">5 個のクエリ</div>
    <div class="list"><slot></slot></div>`
  }
}

class XlQitem extends HTMLElement {
  constructor() { super(); this.attachShadow({ mode: 'open' }) }
  connectedCallback() {
    const a = n => this.getAttribute(n)
    const sel = this.hasAttribute('selected'), tw = this.hasAttribute('twisty')
    const pad = +a('pad'), icon = a('icon')
    const gap = icon === 'doc' || icon === 'param' ? 13 : 11
    const iw = { folder: 27, doc: 25, param: 23, table: 27, fx: 27 }[icon]
    const subLeft = pad + iw + gap + (icon === 'param' ? 2 : 0)
    this.shadowRoot.innerHTML = `<style>
      :host{display:block;margin-top:${a('gap')}px;${sel ? 'margin-left:15px;background:#9fd5b7;padding:6px 0;height:100px;box-sizing:border-box;' : ''}font-size:30px;letter-spacing:0;white-space:nowrap;color:#444;font-feature-settings:normal}
      .h{display:flex;align-items:center;height:42px;padding-left:${pad}px}
      .tw{width:0;height:0;flex:none;border-style:solid;border-width:0 0 15px 15px;border-color:transparent transparent #444 transparent;margin-right:14px;margin-top:2px}
      xl-icon{margin-right:${gap}px}
      .c{font-size:26px;margin-left:9px}
      .sub{height:42px;line-height:42px;padding-left:${subLeft}px;font-size:24px;${sel ? 'letter-spacing:1.300px;margin-top:-1px;' : ''}}
      .right{margin-left:auto;margin-right:6px}
      .lb{margin-bottom:3px;line-height:42px;${sel ? 'font-size:27px;' : ''}}
    </style>
    <div class="h">${tw ? '<span class="tw"></span>' : ''}<xl-icon name="${icon}" style="${icon === 'param' ? 'margin-left:1px;margin-right:14px' : ''}${icon === 'fx' ? 'width:27px;' : ''}"></xl-icon><span class="lb">${a('label')}</span>${a('count') ? `<span class="c">${a('count')}</span>` : ''}${sel ? '<xl-icon class="right" name="docsync"></xl-icon>' : ''}</div>
    ${a('sub') ? `<div class="sub">${a('sub')}</div>` : ''}`
  }
}

class XlCheck extends HTMLElement {
  constructor() { super(); this.attachShadow({ mode: 'open' }) }
  connectedCallback() {
    this.shadowRoot.innerHTML = `<style>
      :host{display:flex;align-items:center;height:38px;gap:7px;font-size:24.500px;line-height:34px;color:#444;white-space:nowrap;font-family:"Noto Sans CJK JP",sans-serif;font-feature-settings:"palt"}
      i{width:25px;height:25px;box-sizing:border-box;background:#fff;border:1.500px solid #777;flex:none;margin-top:3px}
    </style><i></i>${this.getAttribute('label')}`
  }
}

class XlArea extends HTMLElement {
  constructor() { super(); this.attachShadow({ mode: 'open' }) }
  connectedCallback() {
    const h = +this.getAttribute('h')
    this.shadowRoot.innerHTML = `<style>
      :host{display:flex;flex-direction:column;font-size:23px;letter-spacing:-1.500px;color:#444;white-space:nowrap}
      .h{display:flex;align-items:center;gap:10px;padding-left:${this.getAttribute('pad')}px;height:${h}px;box-sizing:border-box;padding-bottom:${h === 40 ? 7 : 4}px}
      .b{height:150px;background:#fff}
    </style><div class="h"><xl-icon name="${this.getAttribute('icon')}"></xl-icon>${this.getAttribute('label')}</div><div class="b"></div>`
  }
}

class XlFields extends HTMLElement {
  constructor() {
    super()
    this.attachShadow({ mode: 'open' }).innerHTML = `<style>
      :host{display:block;width:699px;flex:none;box-sizing:border-box;border-left:2px solid #c8c8c8;padding:0 14px 0 19px;font-family:"Noto Sans CJK JP",sans-serif;color:#444;font-size:22px;font-feature-settings:"palt"}
      xl-panehead{margin:14px 0 0 -2px}
      .pick{display:flex;align-items:center;justify-content:space-between;margin-top:14px;height:42px;letter-spacing:-.8px;white-space:nowrap;line-height:38px}
      .gear{width:72px;height:42px;box-sizing:border-box;background:#f5f5f5;border:1.500px solid #aaa;display:flex;align-items:center;padding-left:7px;gap:7px}
      .find{margin-top:19px;height:35px;box-sizing:border-box;background:#fff;border:1.500px solid #a6a6a6;display:flex;align-items:center;justify-content:space-between;color:#777;padding:0 1px 3px;font-size:24px;line-height:28px}
      .list{margin-top:27px;height:183px;background:#fff;display:flex;justify-content:space-between;position:relative}
      .rows{margin-top:-4px;padding-left:1px}
      .sb{width:33px;margin:2px 1px 1px 0;background:#f3f3f3;display:flex;flex-direction:column;flex:none}
      .sb .u{height:31px;background:#fff;border:1px solid #bbb;box-sizing:border-box;display:flex;align-items:center;justify-content:center}
      .sb .th{height:32px;margin-top:2px;background:#fff;border:1px solid #bbb;box-sizing:border-box}
      .sb .sp{flex:1}
      .dot{margin:18px -3px 0 1px;border-top:1.500px dotted #bbb}
      .drag{margin:0 0 0 3px;height:34px;line-height:34px;letter-spacing:-1.100px;white-space:nowrap}
      .areas{display:grid;grid-template-columns:333px 329px;margin:21px 0 0 2px;position:relative}
      .areas>.l{border-right:2px solid #c8c8c8;padding-right:7px}
      .hr{grid-column:1/3;height:2px;background:#c8c8c8;margin-top:6px}
      .foot{display:flex;align-items:center;margin:25px 0 0 2px;height:44px;letter-spacing:-.5px;gap:12px;white-space:nowrap}
      .foot i{width:26px;height:25px;box-sizing:border-box;background:#fff;border:1.500px solid #8f8f8f;margin-top:2px}
      .up{margin-left:auto;width:65px;height:44px;box-sizing:border-box;background:#f4f4f4;border:1px solid #eee;color:#b0b0b0;text-align:center;line-height:42px;letter-spacing:0}
    </style>
    <xl-panehead label="ピボットテーブルのフィールド" tri="552" close="633"></xl-panehead>
    <div class="pick">レポートに追加するフィールドを選択してください:
      <div class="gear"><xl-icon name="gear"></xl-icon><svg width="15" height="9" viewBox="0 0 15 9"><path d="M0 0H15L7.500 9Z" fill="#7a7a7a"/></svg></div></div>
    <div class="find">検索<xl-icon name="magnifier"></xl-icon></div>
    <div class="list"><div class="rows"><slot></slot></div>
      <div class="sb"><div class="u"><svg width="16" height="10" viewBox="0 0 16 10"><path d="M8 0L16 10H0Z" fill="#777"/></svg></div><div class="th"></div><div class="sp"></div>
      <div class="u"><svg width="14" height="9" viewBox="0 0 14 9"><path d="M7 9L14 0H0Z" fill="#777"/></svg></div></div></div>
    <div class="dot"></div>
    <div class="drag">次のボックス間でフィールドをドラッグしてください:</div>
    <div class="areas">
      <xl-area class="l" icon="filter" label="フィルター" pad="7" h="40"></xl-area>
      <xl-area icon="cols" label="列" pad="9" h="40"></xl-area>
      <div class="hr"></div>
      <xl-area class="l" icon="rows" label="行" pad="8" h="45"></xl-area>
      <xl-area icon="sigma" label="値" pad="9" h="45"></xl-area>
    </div>
    <div class="foot"><i></i>レイアウトの更新を保留する<div class="up">更新</div></div>`
  }
}

customElements.define('xl-icon', XlIcon)
customElements.define('xl-chev', XlChev)
customElements.define('xl-sliver', XlSliver)
customElements.define('xl-app', XlApp)
customElements.define('xl-ribbon', XlRibbon)
customElements.define('xl-group', XlGroup)
customElements.define('xl-big', XlBig)
customElements.define('xl-row', XlRow)
customElements.define('xl-fieldbox', XlFieldbox)
customElements.define('xl-expand', XlExpand)
customElements.define('xl-formula', XlFormula)
customElements.define('xl-sheet', XlSheet)
customElements.define('xl-placeholder', XlPlaceholder)
customElements.define('xl-panehead', XlPaneHead)
customElements.define('xl-queries', XlQueries)
customElements.define('xl-qitem', XlQitem)
customElements.define('xl-check', XlCheck)
customElements.define('xl-area', XlArea)
customElements.define('xl-fields', XlFields)
</script>
</body>
</html>
